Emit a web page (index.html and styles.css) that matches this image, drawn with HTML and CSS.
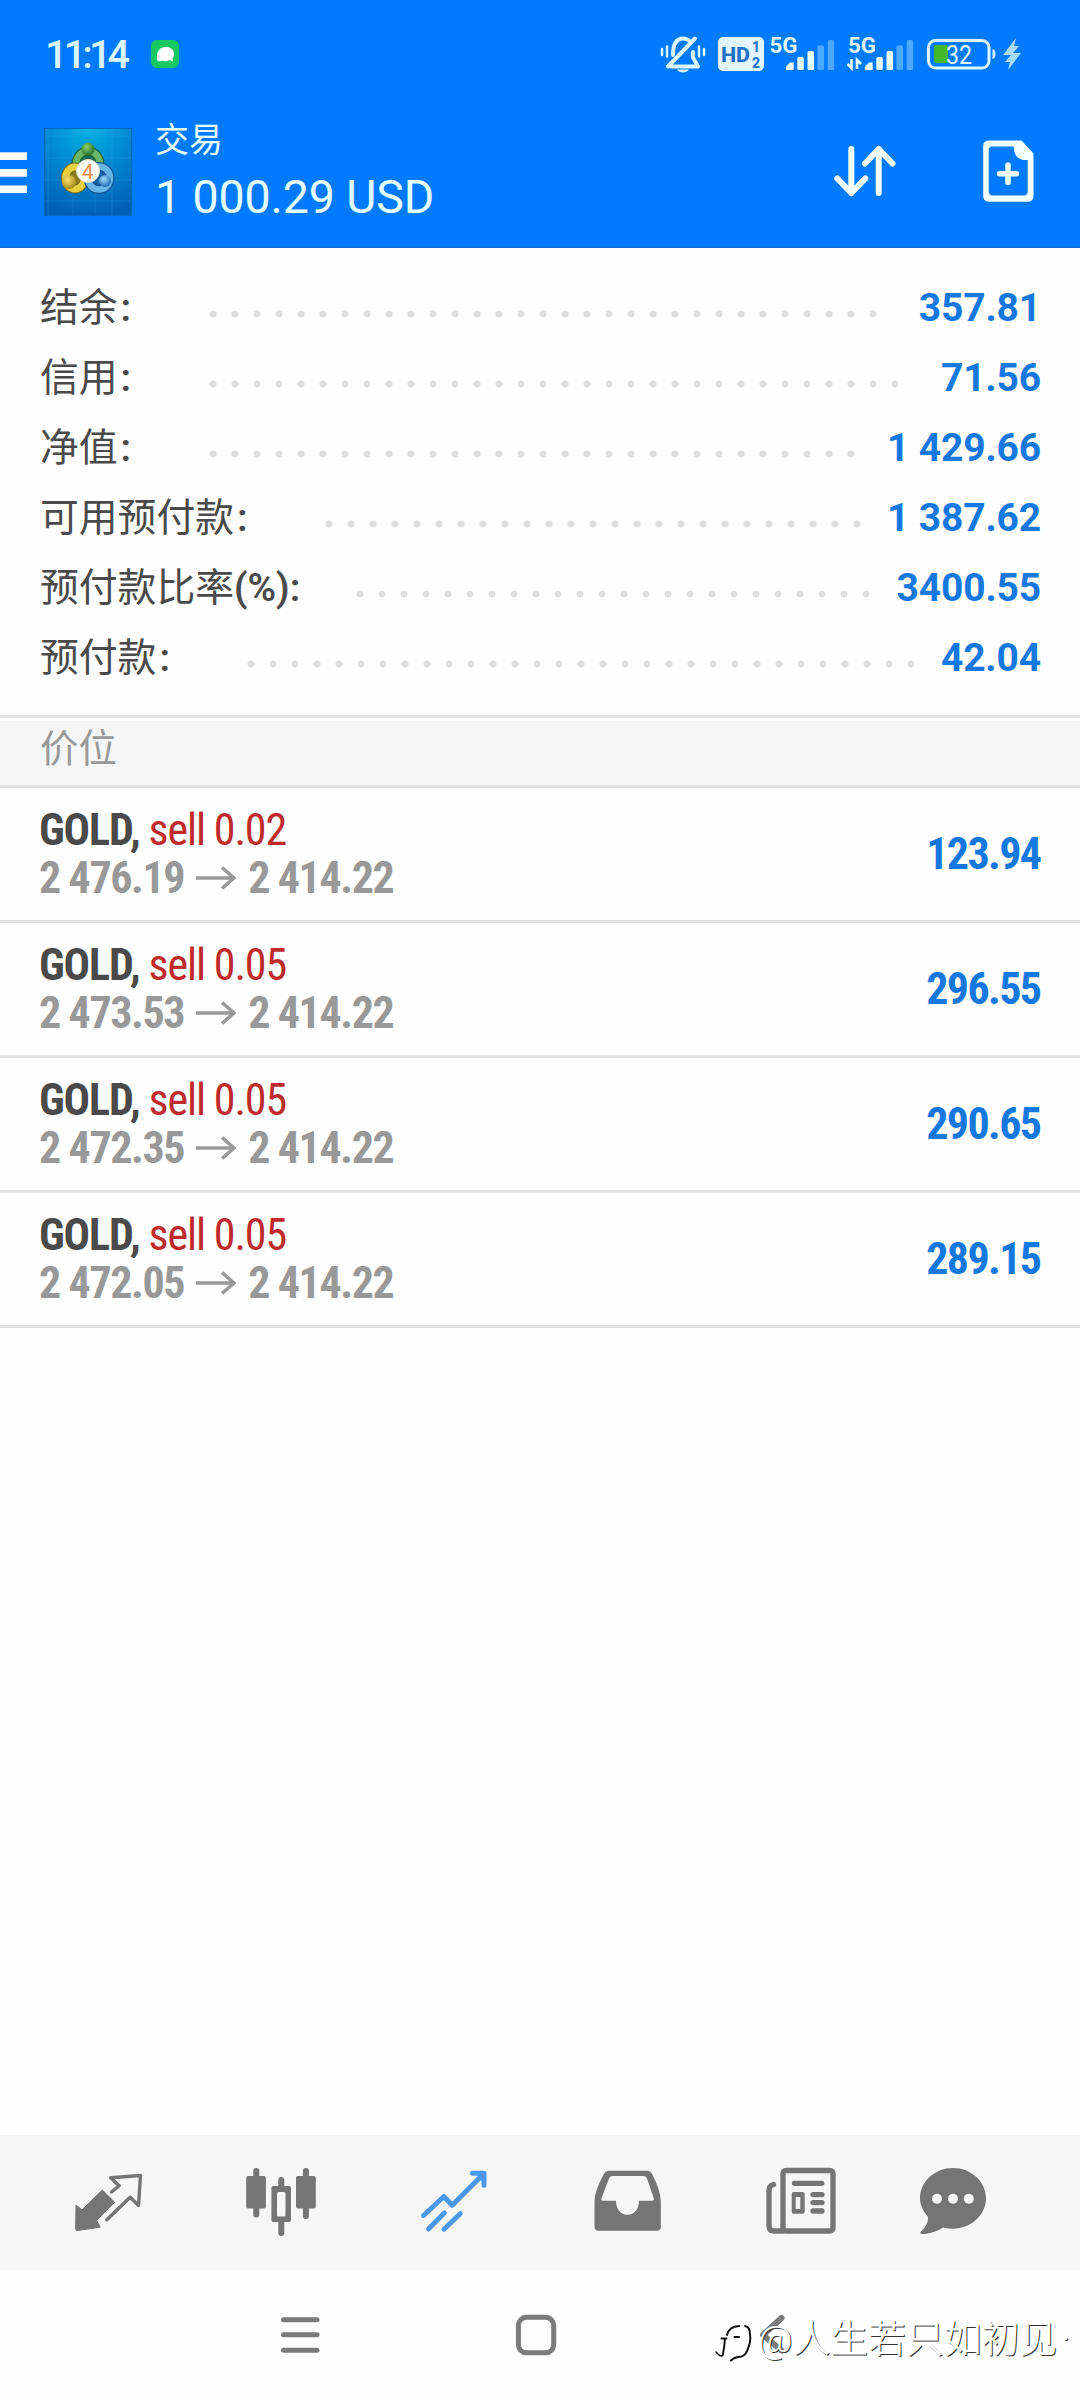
FILE: index.html
```html
<!DOCTYPE html>
<html lang="zh-CN">
<head>
<meta charset="utf-8">
<title>交易</title>
<link rel="stylesheet" href="styles.css">
</head>
<body>
<div class="screen">
  <header class="header">
    <div class="status">
      <span class="clock">11:14</span>
      <svg class="chat-badge" width="28" height="28" viewBox="151 40 28 28">
        <rect x="151" y="40" width="28" height="28" rx="6" fill="#18c860"/>
        <path d="M157 60c-1-9 3-13 9-13 5 0 8 3 8 7 0 2-.6 3.500-1.500 4.500l.5 3-3-1.500c-3 1.500-6 1.500-8 .5l-3 1z" fill="#fff"/>
      </svg>
      <svg class="status-icons" width="370" height="50" viewBox="655 30 370 50">
        <g fill="none" stroke="#d9f5ff" stroke-width="4" stroke-linecap="round" stroke-linejoin="round">
          <path d="M671 66.500h27l-5-9V52M673 55c0-10 3-16.500 10-16.500 3 0 5 1 7 3M695 38.500l-27 28"/>
          <path d="M662 49v6M667 46.500v10M699 46.500v10M704 49v6" stroke-width="2.500"/>
        </g>
        <path d="M677 69.500h12c-2 4-10 4-12 0z" fill="#d9f5ff"/>
        <rect x="718" y="37" width="46" height="34" rx="5" fill="#e2f6ff"/>
        <g class="hd">
          <text x="721" y="61.500" font-size="20" textLength="29" lengthAdjust="spacingAndGlyphs">HD</text>
          <text x="752" y="51.500" font-size="14">1</text>
          <text x="752" y="67.500" font-size="14">2</text>
        </g>
        <g class="net">
          <text x="769.500" y="52.500" textLength="28" lengthAdjust="spacingAndGlyphs">5G</text>
          <text x="848" y="52.500" textLength="28" lengthAdjust="spacingAndGlyphs">5G</text>
        </g>
        <g id="bars" fill="#e6fbff">
          <path d="M786 70v-3.500l4-4h3.700V70z"/>
          <rect x="797.300" y="57" width="6.500" height="13" rx="1.500"/>
          <rect x="807.500" y="51" width="6.500" height="19" rx="1.500"/>
          <rect x="817.500" y="45.500" width="6.500" height="24.500" rx="1.500" fill="#4da9ff"/>
          <rect x="827.700" y="40" width="6.500" height="30" rx="1.500" fill="#4da9ff"/>
        </g>
        <use href="#bars" x="79"/>
        <path d="M851.500 59v9l-4-4M857 69v-9l4 4" fill="none" stroke="#e6fbff" stroke-width="2.600"/>
        <rect x="928.500" y="40.500" width="60.500" height="27.500" rx="7" fill="none" stroke="#d9f5ff" stroke-width="3"/>
        <rect x="934" y="45" width="14" height="18" rx="2" fill="#43b929"/>
        <path d="M992.500 49c4 0 4 10 0 10z" fill="#d9f5ff"/>
        <text class="level" x="946" y="63.500" textLength="26" lengthAdjust="spacingAndGlyphs">32</text>
        <path d="M1016 38l-13 17h8l-6 7h5l-2 8 13-17h-8l6-7h-5z" fill="#a9ddff"/>
      </svg>
    </div>
    <div class="appbar">
      <svg width="27" height="41" viewBox="0 152 27 41" fill="#fff">
        <rect y="152.300" width="27.500" height="7.700"/><rect y="169" width="27.500" height="7.700"/><rect y="185.500" width="27.500" height="7.500"/>
      </svg>
      <svg class="logo" width="88" height="88" viewBox="0 0 88 88">
        <defs>
          <radialGradient id="sky" cx=".5" cy="0" r="1"><stop offset="0" stop-color="#00b2e4"/><stop offset=".5" stop-color="#0086cf"/><stop offset="1" stop-color="#0060b4"/></radialGradient>
          <radialGradient id="gg" cx=".4" cy=".35" r=".7"><stop offset="0" stop-color="#8fd06c"/><stop offset="1" stop-color="#1f6d28"/></radialGradient>
          <radialGradient id="yg" cx=".4" cy=".35" r=".7"><stop offset="0" stop-color="#fbe56a"/><stop offset="1" stop-color="#a18312"/></radialGradient>
          <radialGradient id="bg" cx=".4" cy=".35" r=".7"><stop offset="0" stop-color="#9fdcff"/><stop offset="1" stop-color="#1766ae"/></radialGradient>
        </defs>
        <rect width="88" height="88" fill="url(#sky)"/>
        <path d="M4 0v88M29 0v88M51 0v88M68 0v88M0 8h88M0 30h88M0 52h88M0 73h88" stroke="#3aa5e0" stroke-width="1" opacity=".3"/>
        <rect x=".5" y=".5" width="87" height="87" fill="none" stroke="#0868b8"/>
        <ellipse cx="44" cy="36" rx="12" ry="13" fill="#1d6a55" stroke="#1f6230" stroke-width="9"/>
        <ellipse cx="44" cy="36" rx="12" ry="13" fill="none" stroke="#67b565" stroke-width="6.500"/>
        <ellipse cx="31" cy="50" rx="9.500" ry="11" fill="#8a7c20" stroke="#776b18" stroke-width="9"/>
        <ellipse cx="31" cy="50" rx="9.500" ry="11" fill="none" stroke="#e8cf3e" stroke-width="7"/>
        <ellipse cx="55" cy="50" rx="11" ry="11.500" fill="#1a62a5" stroke="#155393" stroke-width="9"/>
        <ellipse cx="55" cy="50" rx="11" ry="11.500" fill="none" stroke="#68b5e8" stroke-width="6.500"/>
        <circle cx="44" cy="21" r="6.500" fill="url(#gg)"/>
        <circle cx="25" cy="54" r="7" fill="url(#yg)"/>
        <circle cx="61" cy="53" r="6" fill="url(#bg)"/>
        <circle cx="44" cy="43" r="11.500" fill="#fbfbf4" stroke="#d5ddc6"/>
        <text class="four" x="43.700" y="50.500" text-anchor="middle">4</text>
      </svg>
      <div class="title">
        <div class="title-name">交易</div>
        <div class="title-sum">1 000.29 USD</div>
      </div>
      <svg class="sort" width="64" height="56" viewBox="833 144 64 56" fill="none" stroke="#f2ffff" stroke-width="6" stroke-linecap="round" stroke-linejoin="round">
        <path d="M851.300 149v44M837.300 178.500l14 14.500 14-14.500M878.700 193v-44M865 163.500l13.700-14.500 13.800 14.500"/>
      </svg>
      <svg class="new" width="52" height="62" viewBox="982 140 52 62">
        <path fill="#f2ffff" fill-rule="evenodd" d="M989 140.500h32.500l12 13V196q0 5.700-5.500 5.700H989q-5.800 0-5.800-5.700V146q0-5.500 5.800-5.500zM992 146.500q-3.300 0-3.300 4V191q0 4.500 4 4.500h31q4 0 4-4.500V160h-5q-9-2-9-13.500z"/>
        <path d="M1008 165v17.500M999.500 173.700h17" stroke="#f2ffff" stroke-width="5.500" stroke-linecap="round"/>
      </svg>
    </div>
  </header>

  <section class="account">
    <div class="line"><span class="label">结余<i>:</i></span><span class="track"><span class="dots"></span></span><b>357.81</b></div>
    <div class="line"><span class="label">信用<i>:</i></span><span class="track"><span class="dots"></span></span><b>71.56</b></div>
    <div class="line"><span class="label">净值<i>:</i></span><span class="track"><span class="dots"></span></span><b>1 429.66</b></div>
    <div class="line"><span class="label">可用预付款<i>:</i></span><span class="track"><span class="dots"></span></span><b>1 387.62</b></div>
    <div class="line"><span class="label ratio">预付款比率<strong>(%):</strong></span><span class="track"><span class="dots"></span></span><b>3400.55</b></div>
    <div class="line"><span class="label">预付款<i>:</i></span><span class="track"><span class="dots"></span></span><b>42.04</b></div>
  </section>

  <h2 class="section">价位</h2>

  <ul class="positions">
    <li><div><p><strong>GOLD,</strong> <em>sell 0.02</em></p><p class="prices">2 476.19<svg class="arrow" width="40" height="24" viewBox="0 0 40 24"><path d="M0 12h38M26 1.500l12 10.500-12 10.500"/></svg>2 414.22</p></div><b>123.94</b></li>
    <li><div><p><strong>GOLD,</strong> <em>sell 0.05</em></p><p class="prices">2 473.53<svg class="arrow" width="40" height="24" viewBox="0 0 40 24"><path d="M0 12h38M26 1.500l12 10.500-12 10.500"/></svg>2 414.22</p></div><b>296.55</b></li>
    <li><div><p><strong>GOLD,</strong> <em>sell 0.05</em></p><p class="prices">2 472.35<svg class="arrow" width="40" height="24" viewBox="0 0 40 24"><path d="M0 12h38M26 1.500l12 10.500-12 10.500"/></svg>2 414.22</p></div><b>290.65</b></li>
    <li><div><p><strong>GOLD,</strong> <em>sell 0.05</em></p><p class="prices">2 472.05<svg class="arrow" width="40" height="24" viewBox="0 0 40 24"><path d="M0 12h38M26 1.500l12 10.500-12 10.500"/></svg>2 414.22</p></div><b>289.15</b></li>
  </ul>

  <nav class="tabs">
    <svg viewBox="21 2135 173 135">
      <path d="M76 2205l6 5 20.300-20 12.400 12.300-18 18 3.500 7-23.200 3.200q-1.300 0-1.300-1.500z" fill="#757575" stroke="#757575" stroke-linejoin="round"/>
      <path d="M111.500 2192l7.700-6.300-8.500-8 29.800-2.200-2 30-8.300-8.200-23.400 22.400" fill="none" stroke="#757575" stroke-width="3.400" stroke-linejoin="round" stroke-linecap="round"/>
    </svg>
    <svg viewBox="194 2135 173 135">
      <g fill="#757575"><rect x="246.200" y="2176" width="19.700" height="32.500" rx="2"/><rect x="296" y="2176" width="19.800" height="32.500" rx="2"/><path fill-rule="evenodd" d="M273.400 2186h15.600q2 0 2 2v32q0 2-2 2h-15.600q-2 0-2-2v-32q0-2 2-2zM278.500 2192q-1.500 0-1.500 1.500v21.500q0 1.500 1.500 1.500h5.500q1.500 0 1.500-1.500v-21.500q0-1.500-1.500-1.500z"/></g>
      <path d="M256.300 2171v43.500M305.900 2171v45M281.300 2180v7M281.300 2222v11" stroke="#757575" stroke-width="6" stroke-linecap="round"/>
    </svg>
    <svg viewBox="367 2135 173 135">
      <g fill="none" stroke="#4b98e8" stroke-width="5" stroke-linecap="round" stroke-linejoin="round"><path d="M423.500 2215.500l20.400-19 8.300 8.800 31.700-31.800M472.500 2173.300H484v12M444.300 2213l-15.800 16M460.200 2213.700l-16.200 15.500"/></g>
      <path d="M475 2173h11v10l-5-2z" fill="#4b98e8"/>
    </svg>
    <svg viewBox="540 2135 173 135">
      <path fill="#757575" fill-rule="evenodd" d="M609 2170.700h38q3.500 0 5 3 8.800 17 8.800 28v25q0 4-4 4h-58.300q-4 0-4-4v-25q0-11 9.500-28 1.500-3 5-3zM612 2176q-2 0-3 2.500l-7.500 19.500q-.8 2.700 1.500 2.700h13c0 8 4.500 14 11.500 14s11.500-6 11.500-14h13q2.500 0 1.700-2.700l-6.700-19.500q-1-2.500-3-2.500z"/>
    </svg>
    <svg viewBox="713 2135 173 135">
      <g fill="none" stroke="#757575" stroke-width="5.300" stroke-linecap="round" stroke-linejoin="round"><rect x="783" y="2170.500" width="50" height="60.500" rx="3"/><path d="M773.500 2184.500q-4.500 1-4.500 6V2226q0 5 5 5h9M794.500 2183.300h27.300M813 2194.600h9M813 2202.600h9M813 2211h9"/></g>
      <path fill="#757575" fill-rule="evenodd" d="M793.700 2192h9q2 0 2 2v17.700q0 2-2 2h-9q-2 0-2-2V2194q0-2 2-2zM795.700 2197v12h4.600v-12z"/>
    </svg>
    <svg viewBox="886 2135 173 135">
      <path d="M953 2168c18 0 33 13.500 33 30.300s-15 30.400-33 30.400q-5 0-10-1.200c-6 4-14 6.500-20.500 6.500q-3.500 0-1.500-2.500 7.500-7 7-14.500c-5-6-8-12-8-18.700 0-16.800 15-30.300 33-30.300z" fill="#757575"/>
      <g fill="#f6f6f6"><circle cx="937" cy="2198.700" r="5"/><circle cx="953" cy="2198.700" r="5"/><circle cx="968.800" cy="2198.700" r="5"/></g>
    </svg>
  </nav>

  <footer class="sysnav">
    <svg width="40" height="36" viewBox="280 2317 40 36" stroke="#7b7b7b" stroke-width="5" stroke-linecap="round"><path d="M283.500 2319.700h33.500M283.500 2334.800h33.500M283.500 2350.300h33.500"/></svg>
    <svg width="42" height="42" viewBox="515 2313.700 42 42"><rect x="518.400" y="2317" width="35.300" height="35.500" rx="8" fill="none" stroke="#7b7b7b" stroke-width="5"/></svg>
    <svg width="30" height="42" viewBox="757 2314 30 42" fill="none" stroke="#7b7b7b" stroke-width="6" stroke-linecap="round" stroke-linejoin="round"><path d="M781.500 2318l-18.500 17 18.500 15.500"/></svg>
    <div class="watermark">
      <svg width="38" height="42" viewBox="714 2324 38 42" fill="none" stroke="#111" stroke-linecap="round">
        <path d="M716 2354q5 6 7 3" stroke-width="1.500"/>
        <path d="M723 2356q1.500-8 2-15.500M721.500 2340.500h5M727 2337q2-8.500 12-9M734.500 2339h4.500" stroke-width="2"/>
        <path d="M745 2328q5 1 5 8 1 8-1.500 13-2 8-7 9.500-7 .5-10.500 4" stroke-width="2"/>
      </svg>
      <span>@人生若只如初见<i>·</i></span>
    </div>
  </footer>
</div>
</body>
</html>
```
FILE: styles.css
```css
* { box-sizing: border-box; margin: 0; padding: 0; }
body { background: #fff; font-family: Roboto, "Noto Sans CJK SC", sans-serif; }
svg { display: block; flex: none; }
.screen { width: 1080px; height: 2400px; display: flex; flex-direction: column; overflow: hidden; background: #fefefe; }

.header { height: 248px; background: #007aff; border-bottom: 1px solid #1a6fd0; }
.status { height: 100px; padding: 30px 55px 0 45px; display: flex; align-items: flex-start; }
.clock { width: 106px; font-size: 39.5px; line-height: 50px; font-weight: 500; color: #d9f8ff; letter-spacing: -3.8px; }
.chat-badge { margin-top: 10px; }
.status-icons { margin-left: auto; }
.hd text { font-weight: 800; fill: #2070c8; }
.net text { font-size: 22px; font-weight: 700; fill: #dff8ff; }
.level { font-size: 26px; fill: #e8fbff; }
.appbar { height: 147px; display: flex; align-items: flex-start; padding-right: 46px; }
.appbar > svg:first-child { margin-top: 52px; }
.logo { margin: 28px 0 0 17px; }
.four { font-size: 21px; fill: #e9904f; }
.title { margin: 15px 0 0 23px; color: #e4ffff; }
.title-name { font-size: 34px; line-height: 50px; }
.title-sum { font-size: 46.5px; line-height: 56px; margin-top: 4px; letter-spacing: -.1px; white-space: pre; }
.sort { margin: 44px 0 0 auto; }
.new { margin: 40px 0 0 85px; }

.account { height: 470px; padding: 25px 39px 0 40px; border-bottom: 3px solid #e2e3e3; }
.line { height: 70px; display: flex; align-items: center; font-size: 39px; color: #4a4a4a; }
.label { white-space: nowrap; font-size: 38.8px; padding-bottom: 9px; }
.label i { font-style: normal; font-weight: 600; display: inline-block; width: 84px; padding-left: 3px; }
.label strong { font-weight: 600; }
.ratio { width: 309px; }
.track { flex: 1; min-width: 0; margin-right: 14px; }
.dots { display: block; height: 8px; margin-top: 12px; width: round(down, 100%, 22px); background: radial-gradient(circle at 50% 50%, #dedede 3.1px, transparent 3.9px) 0 0 / 22px 8px repeat-x; }
.line b { font-weight: 700; letter-spacing: -.15px; color: #1478e0; }

.section { height: 70px; border-top: 3px solid #fefefe; border-bottom: 3px solid #dfe0e0; background: #f6f6f6; padding-left: 40px; font-size: 38.5px; font-weight: 400; line-height: 56px; color: #999; }

.positions { list-style: none; font-stretch: 75%; font-family: "Roboto Condensed", Roboto, sans-serif; font-size: 44px; letter-spacing: -1.15px; }
.positions li { height: 135px; border-bottom: 3px solid #e2e3e3; padding: 18px 39.5px 0 39px; display: flex; justify-content: space-between; }
.positions p { line-height: 48px; white-space: pre; color: #4a4a4a; }
.positions em { font-style: normal; color: #bf2a2a; }
.positions strong { font-weight: 700; }
.positions .prices { font-weight: 700; letter-spacing: -1.4px; color: #999; display: flex; align-items: center; }
.positions b { line-height: 97px; letter-spacing: -1.6px; color: #1478e0; }
.arrow { margin: 0 12px 0 12px; fill: none; stroke: #999; stroke-width: 3.5; }

.tabs { margin-top: auto; height: 135px; background: #f6f6f6; display: flex; padding-left: 21px; }
.tabs svg { width: 173px; height: 135px; }

.sysnav { position: relative; height: 130px; display: flex; align-items: center; padding-left: 280px; background: #fefefe; }
.sysnav > svg { margin-right: 195px; }
.sysnav > svg + svg { margin-right: 200px; }
.watermark { position: absolute; left: 714px; top: 44px; display: flex; align-items: center; color: #fff; font-size: 37.8px; font-weight: 350; line-height: 48px; white-space: nowrap; text-shadow: 1px 1px 0 #333; }
.watermark svg { margin-top: 8px; }
.watermark span { margin-left: 6px; }
.watermark i { font-style: normal; margin-left: 4px; }
```
